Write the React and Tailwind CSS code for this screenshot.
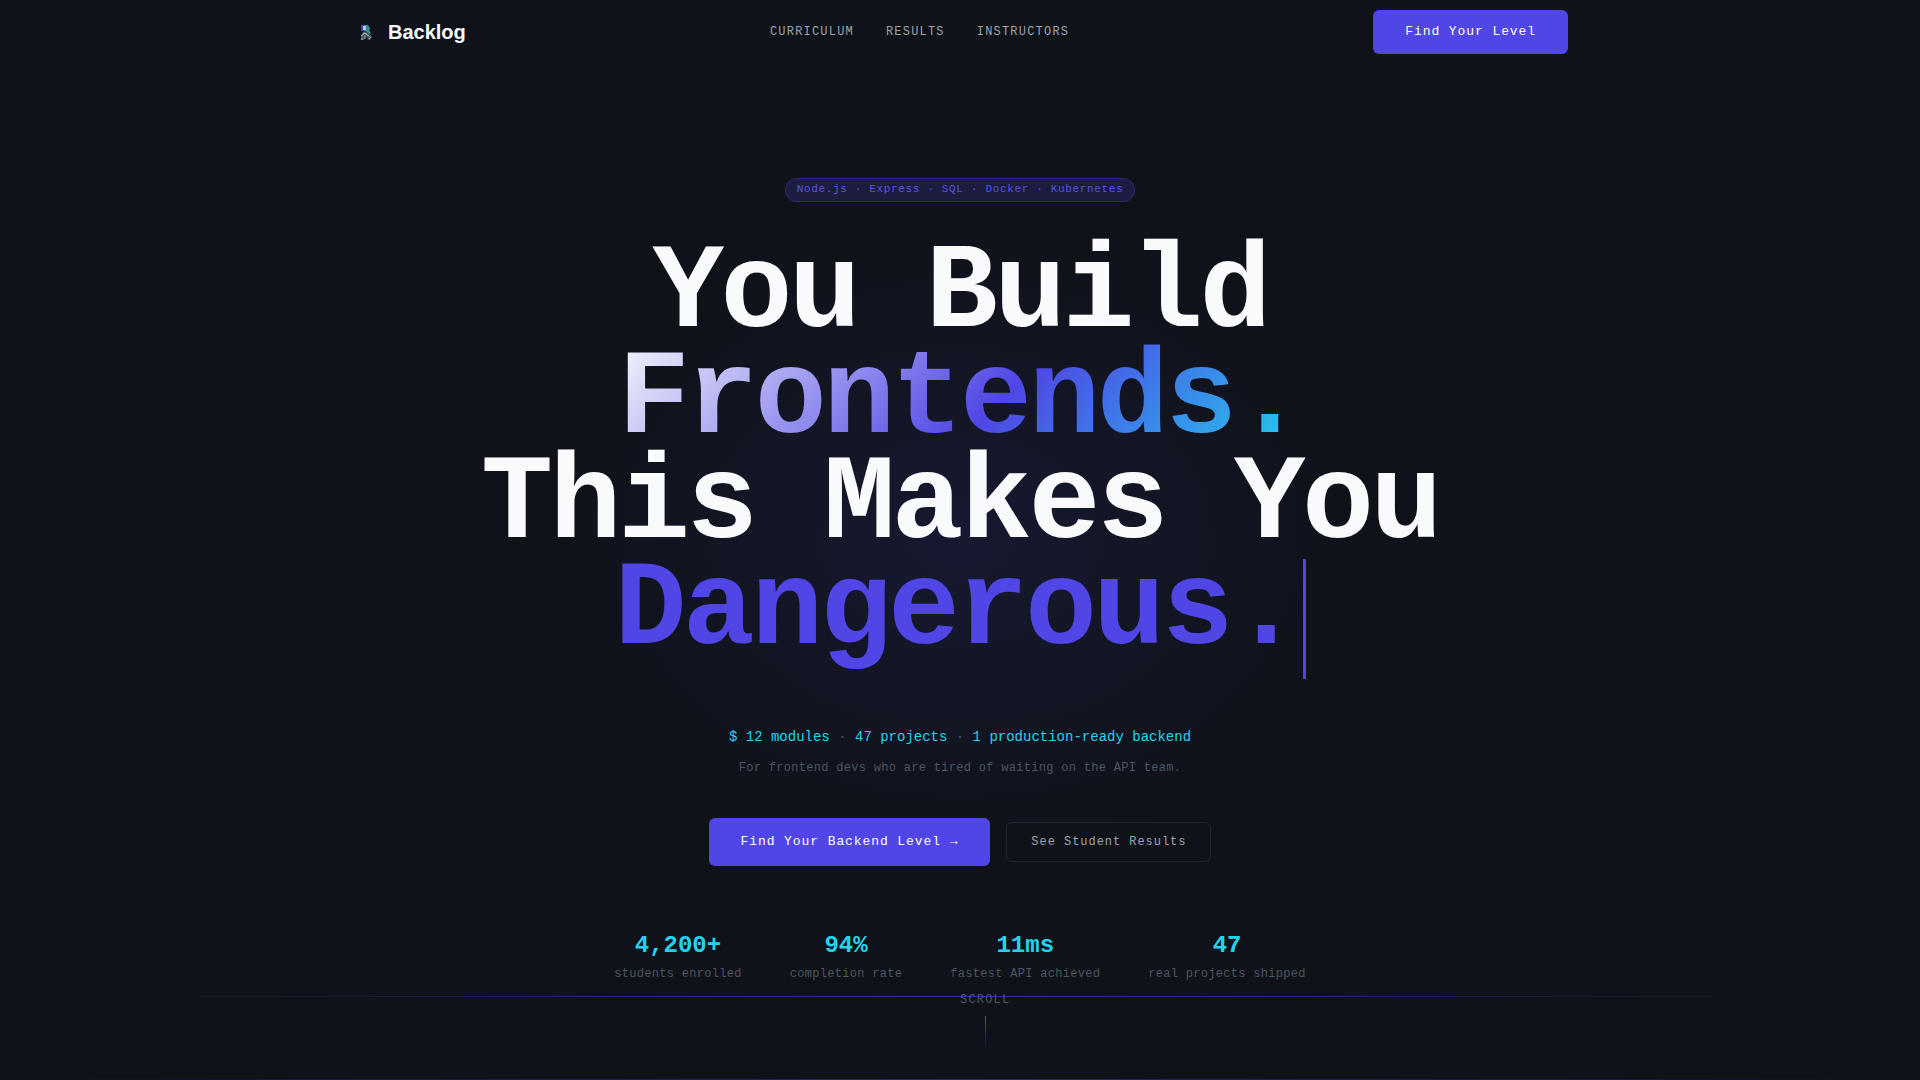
const links = [
  { title: 'Curriculum', href: '#curriculum' },
  { title: 'Results', href: '#results' },
  { title: 'Instructors', href: '#instructors' },
]

const stats = [
  { value: '4,200+', label: 'students enrolled' },
  { value: '94%', label: 'completion rate' },
  { value: '11ms', label: 'fastest API achieved' },
  { value: '47', label: 'real projects shipped' },
]

function Logo() {
  return (
    <svg viewBox="0 0 28 28" className="size-7" aria-hidden="true">
      <path d="M9 7h5l-1 6H9z" fill="#4c3fb8" />
      <path d="M12 7h4l2 3-1 4-5-1z" fill="#2f8f9c" />
      <path d="M11 8h3v4h-3z" fill="#b4c6f5" />
      <path d="M14 12l4 1.500 1 2.500-3-1z" fill="#3fa08c" />
      <path d="M9 18l2-4 3-1 3 2 3 4-2 3h-2l-1-3-2-1-1 4H9z" fill="#4b5563" />
      <path d="M9.500 18l3-3 2.500 1.500 2 2" stroke="#d1d5db" fill="none" />
      <path d="M10 20v2M13 18v3M17 21l2-2" stroke="#a7c4b8" fill="none" />
    </svg>
  )
}

function Header() {
  return (
    <header className="relative z-10">
      <div className="mx-auto flex h-16 max-w-7xl items-center justify-between px-8">
        <a href="#" className="flex items-center gap-2 font-['Liberation_Sans',sans-serif] text-xl font-bold text-slate-50">
          <Logo />
          Backlog
        </a>
        <nav className="flex gap-8">
          {links.map((l) => (
            <a key={l.href} href={l.href} className="text-xs tracking-widest text-[#9ca3af] uppercase">
              {l.title}
            </a>
          ))}
        </nav>
        <button className="h-11 rounded-md bg-[#4f46e5] px-8 text-[13px] tracking-[0.07em] text-white">
          Find Your Level
        </button>
      </div>
    </header>
  )
}

function Stat({ value, label }) {
  return (
    <div className="flex flex-col items-center gap-1">
      <dd className="order-1 text-2xl leading-8 font-bold text-[#22d3ee]">{value}</dd>
      <dt className="order-2 text-xs tracking-wide text-[#4b5563]">{label}</dt>
    </div>
  )
}

export default function App() {
  return (
    <div className="relative min-h-screen overflow-hidden bg-[#0f1218] font-['Liberation_Mono',monospace] text-slate-50">
      {/* glow behind the headline */}
      <div className="pointer-events-none absolute inset-0 bg-[radial-gradient(420px_320px_at_50%_50%,rgba(79,70,229,0.12),transparent)]" />
      <Header />

      <main className="relative flex flex-col items-center pt-[114px] text-center">
        <p className="rounded-full border border-[#4f46e5]/30 bg-[#4f46e5]/20 px-[11px] pt-[2px] pb-1 text-[11px] leading-4 tracking-[0.06em] text-[#5b52e0]">
          Node.js · Express · SQL · Docker · Kubernetes
        </p>

        <h1 className="mt-10 text-[120px] leading-[0.88] font-bold tracking-[-0.03em]">
          <span className="block">You Build</span>
          <span className="block">
            <span className="bg-[linear-gradient(135deg,#f8fafc_0%,#4f46e5_55%,#22d3ee_100%)] bg-clip-text text-transparent">
              Frontends.
            </span>
          </span>
          <span className="block">This Makes You</span>
          <span className="block text-[#4f46e5]">
            Dangerous.
            <span className="ml-1 inline-block h-[1em] w-[3px] bg-[#4f46e5] align-text-bottom" />
          </span>
        </h1>

        <p className="mt-[47px] text-sm leading-[22px] text-[#22d3ee]">
          $ 12 modules <span className="text-[#4b5563]">·</span> 47 projects <span className="text-[#4b5563]">·</span> 1 production-ready backend
        </p>
        <p className="mt-[10px] text-xs leading-5 tracking-wide text-[#4b5563]">
          For frontend devs who are tired of waiting on the API team.
        </p>

        <div className="mt-10 flex items-center gap-4">
          <button className="h-12 rounded-md bg-[#4f46e5] px-8 text-[13px] tracking-[0.07em] text-white">
            Find Your Backend Level →
          </button>
          <button className="h-10 rounded-md border border-[#1f2430] px-6 text-xs tracking-[0.08em] text-[#9ca3af]">
            See Student Results
          </button>
        </div>

        <dl className="mt-16 flex gap-12">
          {stats.map((s) => <Stat key={s.label} {...s} />)}
        </dl>
      </main>

      {/* scroll hint */}
      <div className="absolute bottom-8 left-1/2 flex flex-col items-center gap-2">
        <span className="text-xs tracking-widest text-[#4b5563] uppercase">Scroll</span>
        <span className="h-8 w-px bg-linear-to-b from-[#4f46e5] to-transparent" />
      </div>
      <div className="absolute inset-x-[6%] bottom-[83px] h-px bg-linear-to-r from-transparent via-[#4f46e5]/60 to-transparent" />
      <div className="absolute inset-x-0 bottom-0 h-px bg-linear-to-r from-transparent via-[#4f46e5]/40 to-transparent" />
    </div>
  )
}
